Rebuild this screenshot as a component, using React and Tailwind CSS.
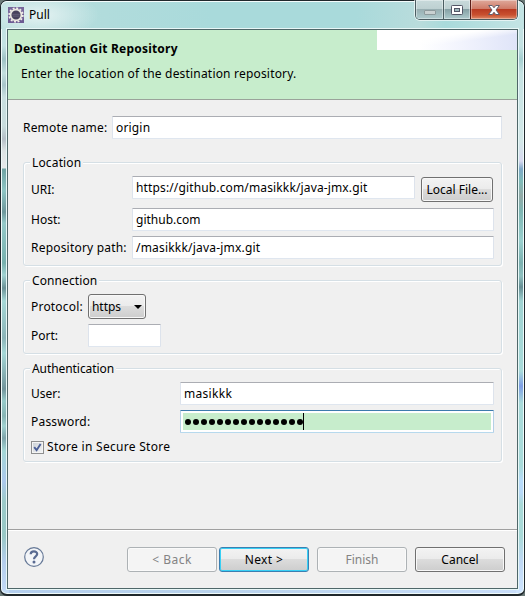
import React from "react";

function Field({ className = "", textClass = "", children }) {
  return (
    <div className={`flex h-[23px] shrink-0 items-center rounded-[1px] border border-x-[#dde3ec] border-b-[#dfe6ef] border-t-[#abadb3] bg-white pl-[3px] ${className}`}>
      <span className={`leading-[19px] whitespace-nowrap ${textClass}`}>{children}</span>
    </div>
  );
}

function Group({ title, titleClass = "", className = "", children }) {
  return (
    <div className={`ml-[15px] w-[479px] shrink-0 rounded-[3px] border border-[#d5dfe5] shadow-[inset_1px_1px_0_#fff,1px_1px_0_#fff] ${className}`}>
      <div className="-mt-[9px] ml-[6px] h-[18px] w-fit bg-[#f0f0f0] px-[2px] leading-[18px]">
        <span className={titleClass}>{title}</span>
      </div>
      {children}
    </div>
  );
}

function Button({ className = "", variant = "normal", children }) {
  const looks = {
    normal:
      "border-[#707070] text-black bg-[linear-gradient(#f3f3f3_0%,#ebebeb_49%,#dcdcdc_50%,#cdcdcd_100%)] shadow-[inset_0_0_0_1px_#f8f8f8]",
    primary:
      "border-[#3c7fb1] text-black bg-[linear-gradient(#f3f3f3_0%,#ebebeb_49%,#dcdcdc_50%,#cdcdcd_100%)] shadow-[inset_0_0_0_1px_#38d0f5]",
    disabled: "border-[#adb2b5] text-[#838383] bg-[#f4f4f4] shadow-[inset_0_0_0_1px_#fafafa]",
  };
  return (
    <button className={`flex h-[25px] shrink-0 items-center justify-center whitespace-nowrap rounded-[3px] border pt-px ${looks[variant]} ${className}`}>
      {children}
    </button>
  );
}

function AppIcon() {
  return (
    <svg className="mt-[6px] ml-[7px] h-4 w-4 shrink-0" viewBox="0 0 16 16">
      <rect width="16" height="16" fill="#6c5b93" />
      <path d="M0 0H16V6L0 13Z" fill="#8173a3" opacity=".5" />
      <circle cx="8" cy="8" r="6.8" fill="none" stroke="#f2efe9" strokeWidth="1.8" strokeDasharray="1.96 1.6" />
      <circle cx="8" cy="8" r="5.4" fill="#48415c" stroke="#ece9e2" strokeWidth="1.7" />
      <path d="M4.2 7.3H11.8M4.4 9.1H11.6" stroke="#6d6781" strokeWidth=".8" />
    </svg>
  );
}

function WindowControls() {
  return (
    <div className="ml-auto mr-[6px] -mt-px flex h-[20px] w-[103px] shrink-0 overflow-hidden rounded-b-[5px] border border-t-0 border-[#4b5d61] shadow-[0_0_0_1px_#ffffff99]">
      <div className="flex w-[27px] items-center justify-center bg-[linear-gradient(#c8dadb_0%,#bdd0d1_48%,#98afb2_50%,#aecbcd_100%)] shadow-[inset_0_0_0_1px_#ffffff66]">
        <svg width="12" height="5" viewBox="0 0 12 5" className="mt-[6px]">
          <rect x=".5" y=".5" width="11" height="4" rx=".5" fill="#c9d1d1" stroke="#8d9a9c" />
        </svg>
      </div>
      <div className="flex w-[27px] items-center justify-center border-l border-[#4b5d61] bg-[linear-gradient(#c8dadb_0%,#bdd0d1_48%,#86a1a5_50%,#aecbcd_100%)] shadow-[inset_0_0_0_1px_#ffffff66]">
        <svg width="12" height="10" viewBox="0 0 12 10">
          <rect x=".5" y=".5" width="11" height="9" rx=".8" fill="#fff" stroke="#535666" />
          <rect x="3.5" y="3.5" width="5" height="3" fill="#9fb9bd" stroke="#535666" />
        </svg>
      </div>
      <div className="flex flex-1 items-center justify-center border-l border-[#5b1d18] bg-[linear-gradient(#dfa99b_0%,#cf7b68_46%,#b93b22_50%,#c9502f_78%,#dd8a68_100%)] shadow-[inset_0_0_0_1px_#ffffff55]">
        <svg width="12" height="10" viewBox="0 0 12 10">
          <path d="M.7.5H4.2L6 2.8 7.8.5H11.3L8 5 11.4 9.5H7.7L6 7.2 4.3 9.5H.6L4 5Z" fill="#fff" stroke="#535666" strokeWidth=".9" />
        </svg>
      </div>
    </div>
  );
}

export default function App() {
  return (
    <div className="h-[596px] w-[525px] overflow-hidden bg-[#6b7a78] font-['Noto_Sans','Open_Sans',sans-serif] text-[12px] text-black">
      <div className="h-[596px] rounded-[7px] border border-b-2 border-[#20282c] bg-[linear-gradient(180deg,#c4e2e3_0px,#c4e2e3_45px,#9fc2c5_58px,#c4dede_72px,#a9c5ca_84px,#c9dfe0_96px,#c8dcdd_125px,#b5bfc7_138px,#dce3e4_150px,#e6e9ea_167px,#6fa3a3_168px,#8ec5c4_190px,#6e989c_211px,#94c9c8_222px,#76b0ad_262px,#a0d2d1_274px,#6b9297_287px,#a5d8d7_300px,#8bb4b8_337px,#a5d8d7_352px,#72959c_388px,#97cbca_400px,#87b4b4_415px,#a0d2d1_425px,#7fa5ab_437px,#a4d7d6_450px,#acc8ec_480px,#9ccac9_500px,#98c8c6_535px,#b3cdeb_560px,#c4dcf7_100%),linear-gradient(180deg,#c4e2e3_0px,#c4e2e3_45px,#a5cfd0_58px,#c6e3e3_72px,#d3e8e8_140px,#d8d9f0_160px,#7fa9c8_168px,#80bcb9_180px,#93aaa7_195px,#7eb6b3_210px,#9ad0ce_240px,#7cb1b0_262px,#8fc0bf_275px,#688f95_286px,#a0d3d2_300px,#a9dbda_370px,#7f9fe6_385px,#a9dbda_402px,#a9dbda_465px,#b8dcfb_480px,#b8d9f8_492px,#a9dad8_503px,#a9dad8_535px,#bfd8f4_560px,#cfe5ff_100%),linear-gradient(90deg,#b4cfee,#b9d3ec_40%,#c9defa)] bg-[position:left_top,right_top,left_top] bg-[size:8px_100%,8px_100%,100%_100%] bg-no-repeat shadow-[inset_0_0_0_1px_#effafa]">
        <div className="flex h-[28px] rounded-t-[6px] bg-[radial-gradient(ellipse_60px_24px_at_38px_14px,#e4f2f2_0%,#d0e6e700_100%),linear-gradient(90deg,#b9dedd_0%,#a9dadb_40%,#a9dadb_68%,#b9dcdc_80%,#a9dadb_85%,#c4e4e4_100%)] shadow-[inset_0_1px_0_#f4fcfc]">
          <AppIcon />
          <span className="mt-[4px] ml-[5px] leading-[20px]">Pull</span>
          <WindowControls />
        </div>
        <div className="mx-[6px] flex h-[560px] flex-col border border-[#4f6769] bg-[#f0f0f0] shadow-[0_0_0_1px_#e8f7f7]">
          <header className="flex h-[70px] shrink-0 justify-between border-b border-[#9aa39a] bg-[#c7edcc]">
            <div className="whitespace-nowrap">
              <div className="mt-[10px] ml-[6px] font-bold leading-[18px] tracking-[0.21px]">Destination Git Repository</div>
              <div className="mt-[7px] ml-[13px] leading-[18px] tracking-[0.19px]">Enter the location of the destination repository.</div>
            </div>
            <div className="h-[20px] w-[140px] shrink-0 bg-[linear-gradient(172deg,#fff_0%,#fff_38%,#ffffff00_60%),linear-gradient(90deg,#fff_30%,#f2f4fd_60%,#dfe4f8_100%)]" />
          </header>

          <div className="mt-[16px] flex h-[23px] shrink-0 items-center pl-[15px]">
            <span className="w-[89px] shrink-0 whitespace-nowrap tracking-[0.17px]">Remote name:</span>
            <Field className="w-[390px]" textClass="tracking-[0.17px]">origin</Field>
          </div>

          <Group title="Location" titleClass="tracking-[0.15px]" className="mt-[23px] h-[104px]">
            <div className="mt-[4px] flex items-start pl-[7px]">
              <span className="w-[101px] shrink-0 pt-[5px] leading-[18px]">URI:</span>
              <Field className="w-[283px]" textClass="tracking-[0.14px]">https://github.com/masikkk/java-jmx.git</Field>
              <Button className="mt-px ml-[6px] w-[72px]">Local File...</Button>
            </div>
            <div className="mt-[6px] flex items-center pl-[7px]">
              <span className="w-[101px] shrink-0">Host:</span>
              <Field className="w-[362px]">github.com</Field>
            </div>
            <div className="mt-[5px] flex items-center pl-[7px]">
              <span className="w-[101px] shrink-0 whitespace-nowrap tracking-[0.2px]">Repository path:</span>
              <Field className="w-[362px]" textClass="tracking-[0.2px]">/masikkk/java-jmx.git</Field>
            </div>
          </Group>

          <Group title="Connection" titleClass="tracking-[0.1px]" className="mt-[14px] h-[74px]">
            <div className="mt-[4px] flex items-center pl-[7px]">
              <span className="w-[57px] shrink-0 tracking-[0.2px]">Protocol:</span>
              <Button className="w-[58px]">
                <span>https</span>
                <svg className="ml-[13px]" width="8" height="4" viewBox="0 0 8 4"><path d="M0 0H8L4 4Z" /></svg>
              </Button>
            </div>
            <div className="mt-[5px] flex items-center pl-[7px]">
              <span className="w-[57px] shrink-0">Port:</span>
              <Field className="w-[73px]" />
            </div>
          </Group>

          <Group title="Authentication" titleClass="tracking-[-0.07px]" className="mt-[14px] h-[94px]">
            <div className="mt-[4px] flex items-center pl-[7px]">
              <span className="w-[149px] shrink-0">User:</span>
              <Field className="w-[314px]" textClass="tracking-[0.3px]">masikkk</Field>
            </div>
            <div className="mt-[5px] flex items-center pl-[7px]">
              <span className="w-[149px] shrink-0 tracking-[0.2px]">Password:</span>
              <div className="flex h-[23px] w-[314px] rounded-[1px] border border-x-[#b5cfe7] border-b-[#b7d9ed] border-t-[#3d7bad] bg-white p-[2px]">
                <div className="flex flex-1 items-center bg-[#c7edcc] pl-[2px]">
                  <div className="flex gap-[2px]">
                    {Array.from({ length: 15 }, (_, i) => (
                      <i key={i} className="h-[6px] w-[6px] rounded-full bg-black" />
                    ))}
                  </div>
                  <i className="h-[17px] w-px bg-black" />
                </div>
              </div>
            </div>
            <div className="mt-[5px] flex items-center pl-[7px]">
              <div className="flex h-[13px] w-[13px] items-center justify-center border border-[#8e8f8f] bg-[linear-gradient(135deg,#c9cfd5,#f6f6f6)] shadow-[inset_0_0_0_1px_#f4f4f4]">
                <svg width="9" height="9" viewBox="0 0 9 9"><path d="M1.2 4.2L3.6 7.2 7.6 1" fill="none" stroke="#4b5f97" strokeWidth="1.9" /></svg>
              </div>
              <span className="ml-[3px] leading-[18px] tracking-[0.29px]">Store in Secure Store</span>
            </div>
          </Group>

          <footer className="mt-auto flex h-[59px] shrink-0 items-start border-t border-[#a0a0a0] pt-[17px] shadow-[inset_0_1px_0_#fff]">
            <svg className="ml-[16px] h-5 w-5" viewBox="0 0 20 20">
              <circle cx="10" cy="10" r="9.3" fill="#f3f5f8" stroke="#667997" strokeWidth="1.2" />
              <path d="M6.7 7.2C6.7 3.4 13.2 3.4 13.2 7.1C13.2 9.4 10 9.3 10 12.2" fill="none" stroke="#5a6b92" strokeWidth="2.2" />
              <circle cx="10" cy="15" r="1.5" fill="#5a6b92" />
            </svg>
            <Button variant="disabled" className="ml-[83px] w-[90px] tracking-[0.5px]">&lt; Back</Button>
            <Button variant="primary" className="ml-[2px] w-[90px] tracking-[0.4px]">Next &gt;</Button>
            <Button variant="disabled" className="ml-[8px] w-[90px]">Finish</Button>
            <Button className="ml-[8px] w-[90px]">Cancel</Button>
          </footer>
        </div>
      </div>
    </div>
  );
}
